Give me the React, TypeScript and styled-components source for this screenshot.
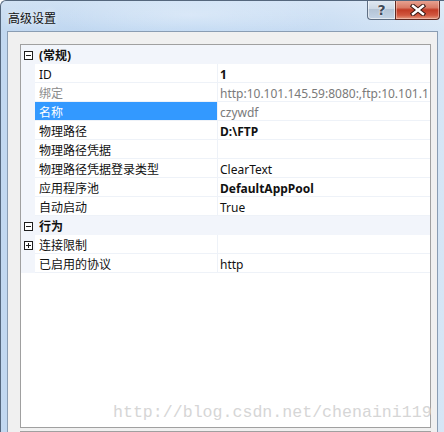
import React from "react";
import styled, { createGlobalStyle } from "styled-components";

interface Prop {
  kind: "category" | "item";
  name: string;
  value?: string;
  bold?: boolean;
  dim?: boolean;
  selected?: boolean;
  box?: "minus" | "plus";
}

const props: Prop[] = [
  { kind: "category", name: "(常规)", box: "minus" },
  { kind: "item", name: "ID", value: "1", bold: true },
  { kind: "item", name: "绑定", value: "http:10.101.145.59:8080:,ftp:10.101.1", dim: true },
  { kind: "item", name: "名称", value: "czywdf", selected: true, dim: true },
  { kind: "item", name: "物理路径", value: "D:\\FTP", bold: true },
  { kind: "item", name: "物理路径凭据", value: "" },
  { kind: "item", name: "物理路径凭据登录类型", value: "ClearText" },
  { kind: "item", name: "应用程序池", value: "DefaultAppPool", bold: true },
  { kind: "item", name: "自动启动", value: "True" },
  { kind: "category", name: "行为", box: "minus" },
  { kind: "item", name: "连接限制", value: "", box: "plus" },
  { kind: "item", name: "已启用的协议", value: "http" },
];

const ExpandBox = ({ type }: { type: "minus" | "plus" }) => (
  <svg width="9" height="9" viewBox="0 0 9 9">
    <rect x="0.5" y="0.5" width="8" height="8" fill="#fff" stroke="#1e1e1e" />
    <line x1="2" y1="4.5" x2="7" y2="4.5" stroke="#1e1e1e" />
    {type === "plus" && <line x1="4.5" y1="2" x2="4.5" y2="7" stroke="#1e1e1e" />}
  </svg>
);

const App = () => {
  return (
    <>
      <GlobalStyle />
      <Window>
        <TitleBar>
          <Title>高级设置</Title>
          <Controls>
            <HelpButton>?</HelpButton>
            <CloseButton>
              <svg width="16" height="12" viewBox="0 0 16 12">
                <path d="M3 2 L13 10 M13 2 L3 10" stroke="#3a1a14" strokeWidth="4.5" strokeLinecap="square" />
                <path d="M3 2 L13 10 M13 2 L3 10" stroke="#fff" strokeWidth="2.4" strokeLinecap="square" />
              </svg>
            </CloseButton>
          </Controls>
        </TitleBar>
        <Frame>
          <Client>
            <Grid>
              {props.map((p, idx) =>
                p.kind === "category" ? (
                  <CategoryRow key={idx}>
                    <Gutter>{p.box && <ExpandBox type={p.box} />}</Gutter>
                    <CategoryLabel>{p.name}</CategoryLabel>
                  </CategoryRow>
                ) : (
                  <Row key={idx}>
                    <Gutter>{p.box && <ExpandBox type={p.box} />}</Gutter>
                    <NameCell $selected={p.selected} $dim={p.dim && !p.selected}>
                      {p.name}
                    </NameCell>
                    <ValueCell $bold={p.bold} $dim={p.dim}>
                      {p.value}
                    </ValueCell>
                  </Row>
                )
              )}
            </Grid>
            <DescPane />
          </Client>
        </Frame>
        <Watermark>http://blog.csdn.net/chenaini119</Watermark>
      </Window>
    </>
  );
};

const GlobalStyle = createGlobalStyle`
  html, body {
    margin: 0;
    padding: 0;
    overflow: hidden;
    background: #ffffff;
  }
`;

const Window = styled.div`
  position: relative;
  width: 444px;
  height: 432px;
  box-sizing: border-box;
  border-top: 1px solid #55677d;
  border-left: 1px solid #55677d;
  border-top-left-radius: 6px;
  overflow: hidden;
  display: flex;
  flex-direction: column;
  background: linear-gradient(90deg, #c2d8f0 0%, #bcd6f2 45%, #c9ddf3 75%, #d6e6f6 100%);
  font-family: "Noto Sans", "Noto Sans CJK SC", sans-serif;
`;

const TitleBar = styled.div`
  height: 30px;
  flex: none;
  display: flex;
  align-items: flex-start;
  background:
    radial-gradient(ellipse 140px 26px at 190px 14px, rgba(255, 255, 255, 0.35), rgba(255, 255, 255, 0)),
    linear-gradient(180deg, rgba(255, 255, 255, 0.25) 0%, rgba(255, 255, 255, 0) 100%);
`;

const Title = styled.div`
  padding: 8px 0 0 7px;
  font-family: "Noto Sans CJK SC", sans-serif;
  font-size: 12px;
  line-height: 18px;
  color: #111;
  text-shadow: 0 0 6px rgba(255, 255, 255, 0.9);
`;

const Controls = styled.div`
  display: flex;
  margin-left: auto;
  margin-right: 4px;
  margin-top: -1px;
`;

const HelpButton = styled.div`
  width: 28px;
  height: 20px;
  box-sizing: border-box;
  border: 1px solid #5f6f84;
  border-top: none;
  border-right: none;
  border-bottom-left-radius: 4px;
  background: linear-gradient(180deg, #e2eaf3 0%, #cdd9e6 45%, #b4c4d6 50%, #c3d3e5 100%);
  box-shadow: inset 0 0 0 1px rgba(255, 255, 255, 0.55);
  display: flex;
  align-items: center;
  justify-content: center;
  font-family: "DejaVu Sans", sans-serif;
  font-weight: bold;
  font-size: 14px;
  color: #3f4a58;
  text-shadow: 0 0 2px #fff, 0 0 1px #fff;
`;

const CloseButton = styled.div`
  width: 45px;
  height: 20px;
  box-sizing: border-box;
  border: 1px solid #5e2a22;
  border-top: none;
  border-bottom-right-radius: 4px;
  background: linear-gradient(180deg, #e9a796 0%, #d97b66 40%, #c23b25 52%, #d1573f 80%, #e49a80 100%);
  box-shadow: inset 0 0 0 1px rgba(255, 220, 210, 0.45);
  display: flex;
  align-items: center;
  justify-content: center;
`;

const Frame = styled.div`
  flex: 1;
  display: flex;
  padding: 0 0 0 6px;
  min-height: 0;
`;

const Client = styled.div`
  flex: none;
  width: 431px;
  box-sizing: border-box;
  border: 1px solid #8a9db3;
  border-bottom: none;
  background: #f0f0f0;
  padding: 12px 6px 0 12px;
  display: flex;
  flex-direction: column;
`;

const Grid = styled.div`
  height: 384px;
  flex: none;
  box-sizing: border-box;
  border: 1px solid #a0a0a0;
  background: #ffffff;
  font-size: 12px;
  overflow: hidden;
`;

const Row = styled.div`
  display: flex;
  height: 19px;
`;

const CategoryRow = styled(Row)`
  background: #f2f5fb;
  font-weight: bold;
`;

const Gutter = styled.div`
  width: 14px;
  flex: none;
  box-sizing: border-box;
  padding: 1px 0 0 3px;
  display: flex;
  align-items: center;
  background: #f2f5fb;
`;

const CategoryLabel = styled.div`
  flex: 1;
  box-sizing: border-box;
  padding: 2px 0 0 4px;
  line-height: 17px;
  color: #111;
`;

const NameCell = styled.div<{ $selected?: boolean; $dim?: boolean }>`
  width: 182px;
  height: 19px;
  flex: none;
  box-sizing: border-box;
  padding: 3px 0 0 4px;
  line-height: 15px;
  border-bottom: 1px solid #eef2f8;
  white-space: nowrap;
  overflow: hidden;
  background: ${(p) => (p.$selected ? "#3399ff" : "#ffffff")};
  color: ${(p) => (p.$selected ? "#ffffff" : p.$dim ? "#8c8c8c" : "#111111")};
`;

const ValueCell = styled.div<{ $bold?: boolean; $dim?: boolean }>`
  flex: 1;
  min-width: 0;
  height: 19px;
  box-sizing: border-box;
  padding: 3px 0 0 2px;
  line-height: 15px;
  border-left: 1px solid #eef2f8;
  border-bottom: 1px solid #eef2f8;
  white-space: nowrap;
  font-weight: ${(p) => (p.$bold ? "bold" : "normal")};
  color: ${(p) => (p.$dim ? "#7a7a7a" : "#111111")};
`;

const DescPane = styled.div`
  margin-top: 3px;
  height: 20px;
  flex: none;
  border: 1px solid #a0a0a0;
  background: #f0f0f0;
`;

const Watermark = styled.div`
  position: absolute;
  left: 112px;
  top: 402px;
  font-family: "Liberation Mono", monospace;
  font-size: 16.6px;
  line-height: 20px;
  color: #d6d6d6;
  white-space: nowrap;
  pointer-events: none;
`;

export default App;
